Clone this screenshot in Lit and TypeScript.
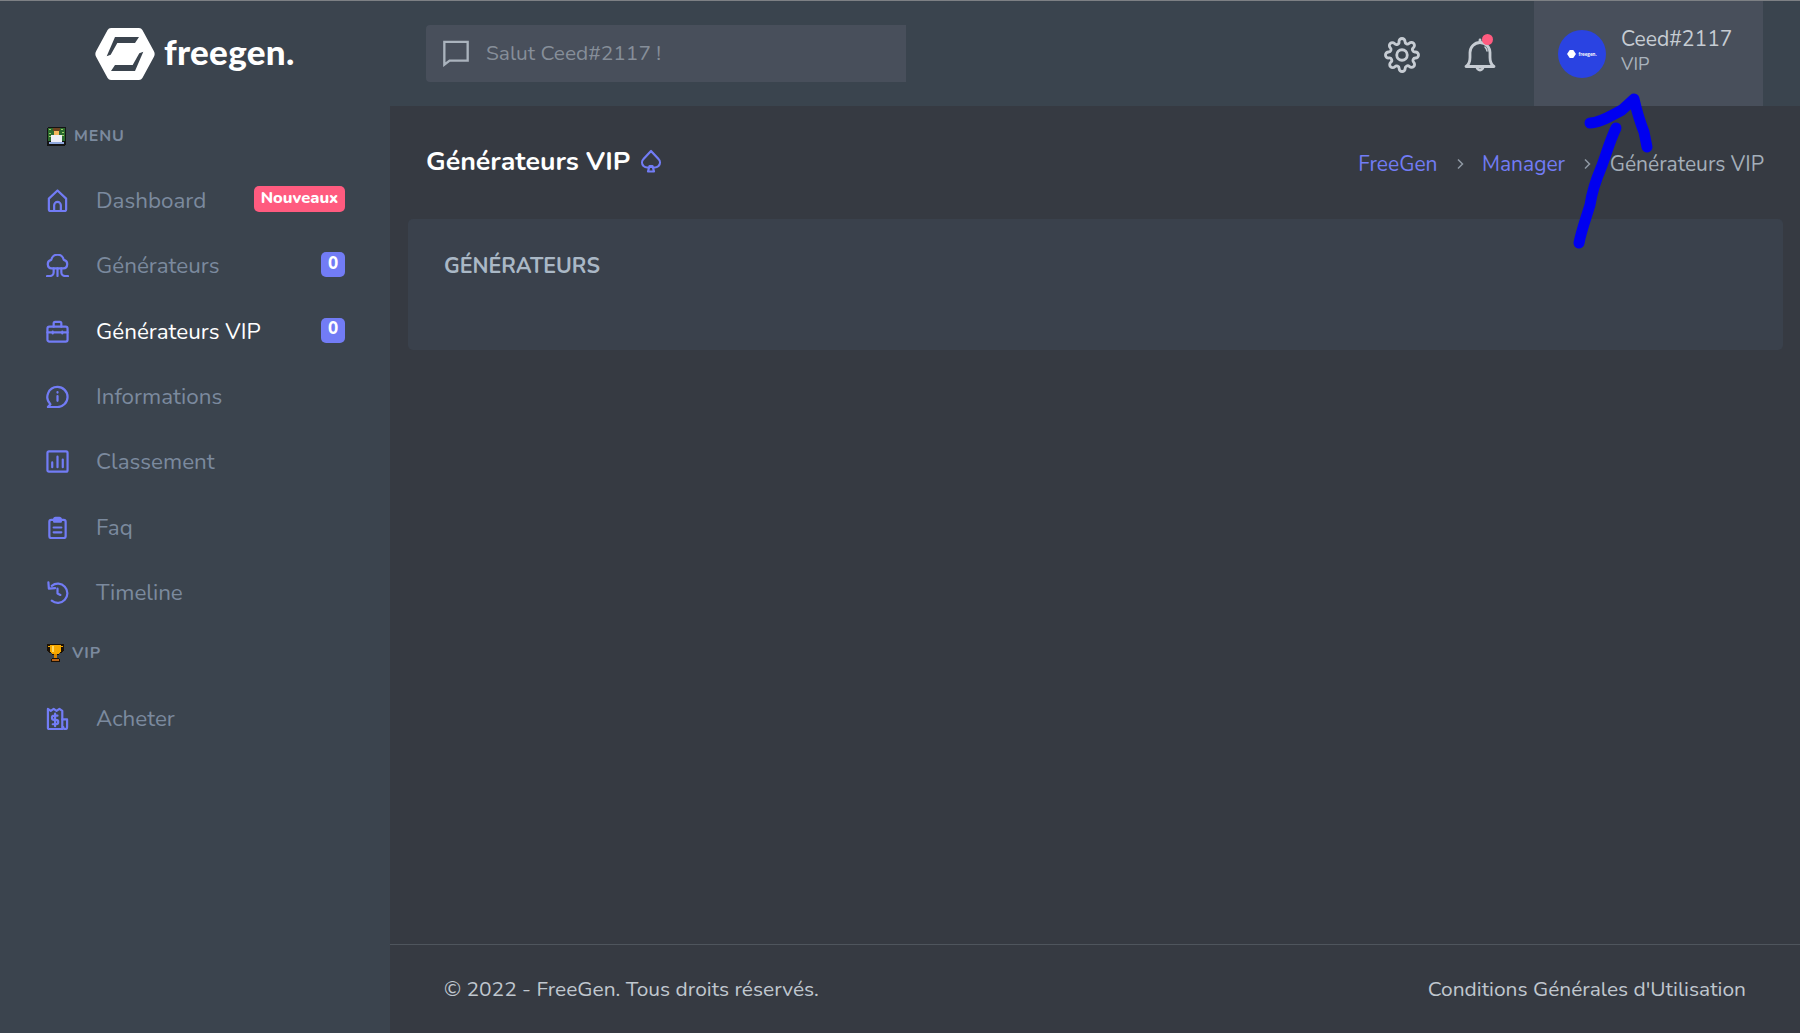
import { LitElement, html, css, svg } from "lit";
import { customElement } from "lit/decorators.js";

const I = (c: any) => html`<svg class="ic" viewBox="0 0 24 24" fill="none" stroke="#727cf5" stroke-width="2.300" stroke-linecap="round" stroke-linejoin="round">${c}</svg>`;

const items: any[] = [
  { t: "Dashboard", b: "Nouveaux", r: true, i: svg`<path d="M3 10 12 1.500 21 10v11.500a1.500 1.500 0 0 1-1.500 1.500h-15A1.500 1.500 0 0 1 3 21.500z"/><path d="M8.500 23v-6a3.500 3.500 0 0 1 7 0v6"/>` },
  { t: "Générateurs", b: "0", i: svg`<path d="M6 15a4.500 4.500 0 0 1-.5-8.900 6.600 6.600 0 0 1 13 0A4.500 4.500 0 0 1 18 15z"/><path d="M1 23h3a4 4 0 0 0 4-4v-4M23 23h-3a4 4 0 0 1-4-4v-4M12 15v8"/>` },
  { t: "Générateurs VIP", b: "0", a: true, i: svg`<rect x="1.500" y="7" width="21" height="15.500" rx="2"/><path d="M8 7V3.500A1.500 1.500 0 0 1 9.500 2h5A1.500 1.500 0 0 1 16 3.500V7M1.500 13h21M7 12v2M17 12v2"/>` },
  { t: "Informations", i: svg`<path d="M12 2a10.500 10.500 0 0 1 0 21H2l2.600-3A10.500 10.500 0 0 1 12 2z"/><path d="M12 11.500v5M12 7.500v.4"/>` },
  { t: "Classement", i: svg`<rect x="1.500" y="1.500" width="21" height="21" rx="1.500"/><path d="M6.500 13v5M12 7v11M17.500 10v8"/>` },
  { t: "Faq", i: svg`<rect x="3.500" y="4" width="17" height="19" rx="2"/><path d="M8.500 6V3.500A1.500 1.500 0 0 1 10 2h4a1.500 1.500 0 0 1 1.500 1.500V6zM8 12h8M8 17h8"/>` },
  { t: "Timeline", i: svg`<path d="M6 5a10 10 0 1 1 0 15.500"/><path d="M2.500 1.500 3 8l6.500-.5M12 8v5l3 1.500"/>` },
];
const buy = svg`<path d="M2 2l3 2 3-2 3 2 3-2 3 2v19H3a1 1 0 0 1-1-1z"/><path d="M17 13h5v8a2 2 0 0 1-4 0M12 9H8.500a1.800 1.800 0 0 0 0 4.500h2a1.800 1.800 0 0 1 0 4.500H7M9.500 7v13"/>`;

const person = html`<svg class="emoji" viewBox="0 0 19 19" shape-rendering="crispEdges">
  <rect width="19" height="19" rx="2" fill="#141414"/><rect x="1" y="1" width="17" height="13" fill="#2b6a2e"/>
  <path d="M2 2h2v1H2zM6 1h1v1H6zM14 2h2v1h-2zM15 5h2v1h-2zM2 6h2v1H2zM15 8h2v1h-2zM2 9h2v1H2z" fill="#9ccc65"/>
  <rect x="6" y="1" width="7" height="3" fill="#6d4321"/><rect x="7" y="4" width="5" height="4" fill="#f5b75e"/>
  <rect x="4" y="8" width="11" height="7" fill="#eeeef6"/><rect x="2" y="15" width="15" height="2" fill="#8fa8dc"/>
</svg>`;
const trophy = html`<svg class="emoji" viewBox="0 0 17 19" shape-rendering="crispEdges">
  <path d="M0 0h17v6l-2 3h-3v2h-2v3h2v1h1v3H4v-3h1v-1h2v-3H5V9H2L0 6z" fill="#1c1206"/>
  <path d="M3 1h11v6l-2 3H5L3 7z" fill="#f6a800"/><path d="M5 2h2v6H5z" fill="#ffd75e"/>
  <path d="M1 2h2v1H1zM14 2h2v1h-2z" fill="#f6a800"/><path d="M7 10h3v4H7z" fill="#d88400"/>
  <path d="M5 15h7v2H5z" fill="#b8651b"/>
</svg>`;

@customElement("app-root")
export class AppRoot extends LitElement {
  static styles = css`
    :host { display: block; width: 1800px; height: 1033px; position: relative; overflow: hidden; font-family: "Nunito", "Lato", "Noto Sans", sans-serif; background: #363a42; }
    .app { display: flex; width: 1800px; height: 1033px; }
    .side { width: 390px; flex: none; background: #3b444e; border-top: 1px solid #7d8084; display: flex; flex-direction: column; padding-left: 47px; padding-right: 45px; box-sizing: border-box; }
    .logo { display: flex; align-items: center; height: 105px; gap: 9px; margin-left: 48px; }
    .logo svg { width: 60px; height: 52px; margin-top: 1px; }
    .logo span { color: #fff; font-family: "Lato", sans-serif; font-weight: 900; font-size: 35px; letter-spacing: .3px; margin-top: -5px; }
    .label { display: flex; align-items: center; gap: 8px; height: 24px; color: #7b8a9e; font-weight: 700; font-size: 16px; letter-spacing: .9px; margin-top: 18px; }
    .label span { margin-top: 0; }
    .label.vip { margin-top: 16px; gap: 8px; }
    .emoji { width: 19px; height: 19px; flex: none; }
    .vip .emoji { width: 17px; }
    .nav { display: flex; align-items: center; height: 65.300px; font-size: 22.400px; color: #7b8a9e; font-weight: 400; }
    .first { margin-top: 20px; }
    .nav.active { color: #fff; }
    .buy { margin-top: 21px; }
    .ic { width: 23px; height: 23px; flex: none; margin-right: 27px; margin-left: -1px; }
    .nav span { flex: 1; }
    .badge { background: #727cf5; color: #fff; font: 800 17px "Nunito", sans-serif; border-radius: 5px; height: 25px; min-width: 24px; display: flex; align-items: center; justify-content: center; padding-bottom: 3px; box-sizing: border-box; margin-top: -2px; }
    .badge.red { background: #ff5b7f; width: 91px; height: 26px; font-size: 16.500px; margin-top: -4px; }
    .main { flex: 1; display: flex; flex-direction: column; min-width: 0; }
    .top { height: 106px; flex: none; background: #3a444e; border-top: 1px solid #7d8084; box-sizing: border-box; display: flex; align-items: center; padding-left: 36px; }
    .search { width: 480px; height: 57px; margin-top: -1px; background: #484f5b; border-radius: 4px 0 0 4px; display: flex; align-items: center; padding-left: 16px; box-sizing: border-box; gap: 16px; color: #868e99; font-size: 20.900px; }
    .search svg { width: 28px; height: 28px; flex: none; }
    .tools { margin-left: auto; display: flex; align-items: center; height: 100%; margin-right: 37px; }
    .tool { position: relative; width: 36px; height: 36px; display: block; }
    .gear { margin-right: 42px; margin-top: 2px; }
    .bell { margin-right: 36px; margin-top: 2px; }
    .dot { position: absolute; width: 11px; height: 11px; background: #ff5b7f; border-radius: 50%; top: -3px; right: 5px; }
    .profile { width: 229px; height: 105px; background: #484f5b; display: flex; align-items: center; padding-left: 24px; box-sizing: border-box; gap: 15px; }
    .avatar { width: 48px; height: 48px; border-radius: 50%; background: #2a43e2; display: flex; align-items: center; justify-content: center; gap: 2px; color: #fff; font: 700 5px "Lato", sans-serif; }
    .avatar svg { width: 9px; height: 8px; flex: none; }
    .who { display: flex; flex-direction: column; margin-top: -10px; }
    .who b { font-weight: 400; font-size: 21.100px; color: #c6ccd3; line-height: 30px; }
    .who small { font-size: 18px; color: #aab3bd; line-height: 20px; }
    .head { display: flex; align-items: center; padding: 0 36px 0 36px; height: 113px; flex: none; }
    .head h1 { margin: 0 0 4px; font-size: 26.750px; font-weight: 700; color: #fff; }
    .head svg { width: 22px; height: 24px; margin-left: 10px; margin-bottom: 4px; }
    .crumbs { margin-left: auto; display: flex; align-items: center; font-size: 21px; color: #a4aeb9; margin-top: 3px; }
    .crumbs a { color: #727cf5; }
    .sep { width: 44.500px; display: flex; justify-content: center; }
    .sep svg { width: 10px; height: 12px; margin: 0; }
    .card { margin: 0 17px 0 18px; height: 131px; background: #3a414c; border-radius: 5px; padding: 32px 36px; box-sizing: border-box; color: #aab8c6; font-size: 21.400px; font-weight: 700; line-height: 30px; flex: none; }
    .foot { margin-top: auto; height: 89px; border-top: 1px solid #4f555d; padding: 0 54px 0 54px; display: flex; align-items: center; justify-content: space-between; color: #c0c7cf; font-size: 20.950px; box-sizing: border-box; }
    .arrow { position: absolute; left: 0; top: 0; width: 1800px; height: 1033px; pointer-events: none; }
  `;

  render() {
    const chev = html`<span class="sep"><svg viewBox="0 0 10 12" fill="none" stroke="#8f98a3" stroke-width="1.500"><path d="M3 1.500 7.500 6 3 10.500"/></svg></span>`;
    return html`
      <div class="app">
        <aside class="side">
          <div class="logo">
            <svg viewBox="0 0 60 52">
              <path fill="#fff" fill-rule="evenodd" d="M16 0h28a4 4 0 0 1 3.400 2L58.800 23a6 6 0 0 1 0 6L47.400 50a4 4 0 0 1-3.400 2H16a4 4 0 0 1-3.400-2L1.200 29a6 6 0 0 1 0-6L12.600 2A4 4 0 0 1 16 0zM11.700 28.300 20 9h24l-4 6H22.300L15.700 26.700zM48.300 23.700 40 43H16l4-6h17.700L44.300 25.300z"/>
            </svg>
            <span>freegen.</span>
          </div>
          <div class="label">${person}MENU</div>
          <div class="first"></div>
          ${items.map((n) => html`<div class="nav ${n.a ? "active" : ""}">${I(n.i)}<span>${n.t}</span>${n.b ? html`<div class="badge ${n.r ? "red" : ""}">${n.b}</div>` : ""}</div>`)}
          <div class="label vip">${trophy}VIP</div>
          <div class="buy"></div>
          <div class="nav">${I(buy)}<span>Acheter</span></div>
        </aside>
        <div class="main">
          <header class="top">
            <div class="search">
              <svg viewBox="0 0 24 24" fill="none" stroke="#aab3bd" stroke-width="2"><path d="M2 2.500h20v16H6.500L2 22z"/></svg>
              <span>Salut Ceed#2117 !</span>
            </div>
            <div class="tools">
              <svg class="tool gear" viewBox="0 0 24 24" fill="none" stroke="#c6ccd3" stroke-width="1.900" stroke-linejoin="round"><circle cx="12" cy="12" r="3.500"/><path d="M19.400 15a1.650 1.650 0 0 0 .33 1.820l.06.06a2 2 0 1 1-2.830 2.830l-.06-.06a1.650 1.650 0 0 0-2.800 1.170V21a2 2 0 0 1-4 0v-.09a1.650 1.650 0 0 0-2.820-1.120l-.06.06a2 2 0 1 1-2.830-2.830l.06-.06A1.650 1.650 0 0 0 3.090 14H3a2 2 0 0 1 0-4h.09a1.650 1.650 0 0 0 1.120-2.820l-.06-.06a2 2 0 1 1 2.830-2.830l.06.06A1.650 1.650 0 0 0 10 3.090V3a2 2 0 0 1 4 0v.09a1.650 1.650 0 0 0 2.820 1.120l.06-.06a2 2 0 1 1 2.830 2.830l-.06.06A1.650 1.650 0 0 0 20.910 10H21a2 2 0 0 1 0 4h-.09a1.650 1.650 0 0 0-1.510 1z"/></svg>
              <div class="tool bell">
                <svg viewBox="0 0 36 36" width="36" height="36" fill="none" stroke="#c6ccd3" stroke-width="2.800" stroke-linejoin="round" stroke-linecap="round"><path d="M4 29.500h28c-3-2-4-5-4-9v-5a10 10 0 0 0-20 0v5c0 4-1 7-4 9z"/><path d="M15 30a3 3 0 0 0 6 0M18 5V3"/><path d="M23 10a7 7 0 0 1 2 4" stroke-width="1.500"/></svg>
                <div class="dot"></div>
              </div>
              <div class="profile">
                <div class="avatar"><svg viewBox="0 0 10 9"><path fill="#fff" d="M3 0h4l3 4.500L7 9H3L0 4.500z"/></svg><span>freegen.</span></div>
                <div class="who"><b>Ceed#2117</b><small>VIP</small></div>
              </div>
            </div>
          </header>
          <div class="head">
            <h1>Générateurs VIP</h1>
            <svg viewBox="0 0 22 24" fill="none" stroke="#727cf5" stroke-width="2.200" stroke-linejoin="round"><path d="M11 2 3.500 10a5 5 0 0 0 0 7 5.500 5.500 0 0 0 7.500 0 5.500 5.500 0 0 0 7.500 0 5 5 0 0 0 0-7zM8 22.500h6l-1.500-5.500h-3z"/></svg>
            <div class="crumbs"><a>FreeGen</a>${chev}<a>Manager</a>${chev}<span>Générateurs VIP</span></div>
          </div>
          <section class="card">GÉNÉRATEURS</section>
          <footer class="foot"><div>© 2022 - FreeGen. Tous droits réservés.</div><div>Conditions Générales d'Utilisation</div></footer>
        </div>
      </div>
      <svg class="arrow" viewBox="0 0 1800 1033" fill="none" stroke="#0000f0" stroke-linecap="round" stroke-linejoin="round">
        <path stroke-width="11" d="M1616 128C1610 140 1605 158 1601 168 1595 182 1592 192 1590 205 1586 218 1581 232 1579 243"/>
        <path stroke-width="11" d="M1590 123C1600 123 1612 115 1622 110L1634 99C1637 112 1640 122 1644 132L1647 147"/>
      </svg>
    `;
  }
}
